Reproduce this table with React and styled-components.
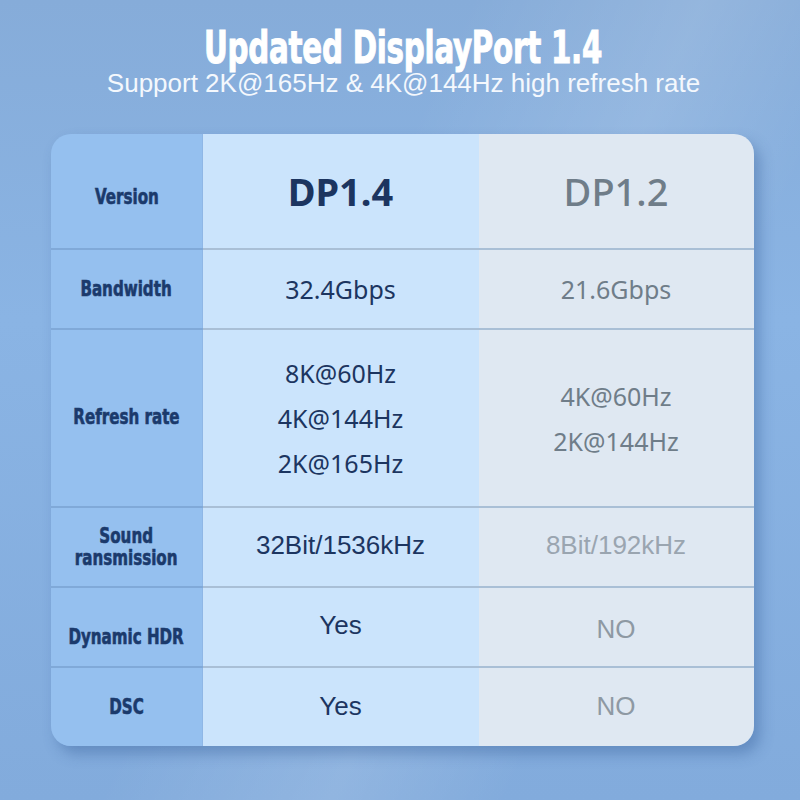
import React from 'react'
import styled, { createGlobalStyle } from 'styled-components'

const GlobalStyle = createGlobalStyle`
  html, body {
    margin: 0;
    padding: 0;
  }
  body {
    font-family: "Liberation Sans", Arial, sans-serif;
  }
`

const rows = [
  { label: ['Version'], shift: 12, a: ['DP1.4'], b: ['DP1.2'], kind: 'head' },
  { label: ['Bandwidth'], a: ['32.4Gbps'], b: ['21.6Gbps'], kind: 'noto' },
  {
    label: ['Refresh rate'],
    shift: -2,
    a: ['8K@60Hz', '4K@144Hz', '2K@165Hz'],
    b: ['4K@60Hz', '2K@144Hz'],
    kind: 'noto',
  },
  { label: ['Sound', 'ransmission'], a: ['32Bit/1536kHz'], aShift: -2, b: ['8Bit/192kHz'], bShift: -2, kind: 'arial', fade: true },
  { label: ['Dynamic HDR'], shift: 20, a: ['Yes'], aShift: -2, b: ['NO'], bShift: 2, kind: 'arial' },
  { label: ['DSC'], a: ['Yes'], aShift: -1, b: ['NO'], bShift: -1, kind: 'arial' },
]

const App = () => (
  <Page>
    <GlobalStyle />
    <Header>
      <Title>Updated DisplayPort 1.4</Title>
      <Subtitle>Support 2K@165Hz &amp; 4K@144Hz high refresh rate</Subtitle>
    </Header>
    <Card>
      {rows.map((r, i) => (
        <React.Fragment key={i}>
          <LabelCell $first={i === 0} $shift={r.shift || 0}>
            <Label>
              {r.label.map((l) => (
                <span key={l}>{l}</span>
              ))}
            </Label>
          </LabelCell>
          <ValueCell $first={i === 0} $col="a" $shift={r.aShift || 0}>
            {r.a.map((v) => (
              <Value key={v} $kind={r.kind} $col="a">
                {v}
              </Value>
            ))}
          </ValueCell>
          <ValueCell $first={i === 0} $col="b" $shift={r.bShift || 0}>
            {r.b.map((v) => (
              <Value key={v} $kind={r.kind} $col="b" $fade={r.fade}>
                {v}
              </Value>
            ))}
          </ValueCell>
        </React.Fragment>
      ))}
    </Card>
  </Page>
)

export default App

const Page = styled.div`
  width: 800px;
  height: 800px;
  overflow: hidden;
  display: flex;
  flex-direction: column;
  align-items: center;
  background:
    linear-gradient(115deg, rgba(255, 255, 255, 0) 40%, rgba(255, 255, 255, 0.12) 60%, rgba(255, 255, 255, 0) 75%),
    linear-gradient(180deg, #86acd9 0%, #8ab4e4 40%, #82abdc 100%);
`

const Header = styled.div`
  display: flex;
  flex-direction: column;
  align-items: center;
  padding-top: 28px;
  padding-left: 7px;
  height: 110px;
  box-sizing: border-box;
`

const Title = styled.div`
  font-family: "DejaVu Sans Condensed", "DejaVu Sans", sans-serif;
  font-weight: 700;
  font-size: 44px;
  line-height: 40px;
  color: #ffffff;
  -webkit-text-stroke: 1px #ffffff;
  transform: scaleX(0.74);
  white-space: nowrap;
  letter-spacing: -0.3px;
`

const Subtitle = styled.div`
  font-family: "Liberation Sans", Arial, sans-serif;
  font-size: 26px;
  line-height: 28px;
  color: #f4f8fd;
  margin-top: 1px;
  white-space: nowrap;
`

const Card = styled.div`
  margin-top: 24px;
  margin-left: 4px;
  width: 703px;
  display: grid;
  grid-template-columns: 152px 276px 275px;
  grid-template-rows: 114px 80px 178px 80px 80px 80px;
  border-radius: 20px;
  overflow: hidden;
  box-shadow: 6px 8px 14px rgba(40, 80, 140, 0.35);
`

const LabelCell = styled.div`
  background: #95c0ef;
  border-top: ${(p) => (p.$first ? 'none' : '2px solid #80a9d8')};
  display: flex;
  align-items: center;
  justify-content: center;
  padding-top: ${(p) => (p.$shift > 0 ? p.$shift : 0)}px;
  padding-bottom: ${(p) => (p.$shift < 0 ? -p.$shift : 0)}px;
  box-sizing: border-box;
  box-shadow: inset -1px 0 0 #8fb7e6;
`

const Label = styled.div`
  display: flex;
  flex-direction: column;
  align-items: center;
  font-family: "DejaVu Sans Condensed", "DejaVu Sans", sans-serif;
  font-weight: 700;
  font-size: 21px;
  line-height: 22px;
  color: #1b3a6c;
  -webkit-text-stroke: 0.6px #1b3a6c;
  transform: scaleX(0.8);
  white-space: nowrap;
`

const ValueCell = styled.div`
  background: ${(p) => (p.$col === 'a' ? '#cbe4fc' : '#dfe8f2')};
  border-top: ${(p) => (p.$first ? 'none' : '2px solid #a9bfd6')};
  display: flex;
  flex-direction: column;
  align-items: center;
  justify-content: center;
  gap: 13px;
  box-sizing: border-box;
  padding-top: ${(p) => (p.$shift > 0 ? p.$shift * 2 : 0)}px;
  padding-bottom: ${(p) => (p.$shift < 0 ? -p.$shift * 2 : 0)}px;
`

const kinds = {
  head: `
    font-family: "Noto Sans", "Open Sans", sans-serif;
    font-size: 38px;
    line-height: 40px;
  `,
  noto: `
    font-family: "Noto Sans", "Open Sans", sans-serif;
    font-size: 25px;
    line-height: 32px;
  `,
  arial: `
    font-family: "Liberation Sans", Arial, sans-serif;
    font-size: 26px;
    line-height: 30px;
  `,
}

const Value = styled.div`
  ${(p) => kinds[p.$kind]}
  font-weight: ${(p) => (p.$kind === 'head' && p.$col === 'a' ? 700 : p.$kind === 'head' ? 500 : 400)};
  color: ${(p) => (p.$col === 'a' ? '#1c3560' : p.$fade ? '#9aa5b0' : p.$kind === 'arial' ? '#8e99a3' : '#6f7d89')};
  white-space: nowrap;
`
